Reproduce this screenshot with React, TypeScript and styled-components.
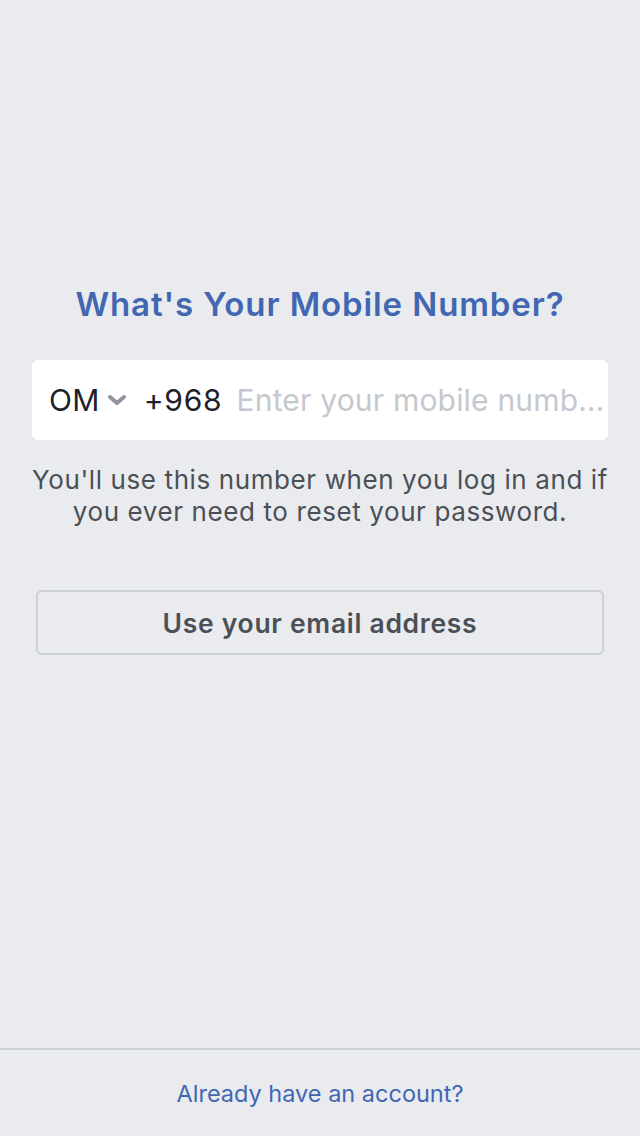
import React from "react";
import styled, { createGlobalStyle } from "styled-components";

const Global = createGlobalStyle`
  html, body { margin: 0; padding: 0; background: #e9ebee; }
  body { font-family: Inter, "Noto Sans", "Liberation Sans", sans-serif; -webkit-font-smoothing: antialiased; }
  * { box-sizing: border-box; }
`;

const Page = styled.div`
  display: flex;
  flex-direction: column;
  height: 1136px;
  background: #e9ebee;
`;

const Main = styled.main`
  flex: 1;
  display: flex;
  flex-direction: column;
  padding: 282px 32px 0;
`;

const Title = styled.h1`
  margin: 0;
  text-align: center;
  font-size: 33px;
  line-height: 44px;
  font-weight: 600;
  color: #4267b2;
  letter-spacing: 0.9px;
  white-space: nowrap;
`;

const InputBox = styled.div`
  margin-top: 34px;
  height: 80px;
  background: #fff;
  border-radius: 6px;
  display: flex;
  align-items: center;
  padding: 0 0 0 17px;
  overflow: hidden;
  font-size: 30px;
  color: #1d2129;
`;

const Country = styled.span`
  display: flex;
  align-items: center;
  gap: 7px;
  letter-spacing: 0.3px;
`;

const Code = styled.span`
  margin-left: 17px;
  letter-spacing: 0.8px;
`;

const PhoneInput = styled.input`
  flex: 1;
  min-width: 0;
  margin-left: 14px;
  padding: 0 2px 0 0;
  border: none;
  outline: none;
  background: transparent;
  font-family: inherit;
  font-size: 30px;
  color: #1d2129;
  letter-spacing: 0.2px;
  text-overflow: ellipsis;
  &::placeholder {
    color: #c5c8ce;
    opacity: 1;
  }
`;

const Help = styled.p`
  margin: 24px -8px 0;
  text-align: center;
  font-size: 26px;
  line-height: 32px;
  color: #4b4f56;
  letter-spacing: 0.6px;
`;

const Button = styled.button`
  margin: 62px 4px 0;
  height: 65px;
  background: transparent;
  border: 2px solid #ccd0d5;
  border-radius: 6px;
  font-family: inherit;
  font-size: 26.5px;
  font-weight: 600;
  color: #4b4f56;
  letter-spacing: 0.7px;
`;

const Footer = styled.footer`
  border-top: 2px solid #ccd0d5;
  height: 88px;
  display: flex;
  align-items: center;
  justify-content: center;
  font-size: 23.5px;
  color: #4267b2;
  letter-spacing: 0;
`;

const Chevron = () => (
  <svg width="20" height="12" viewBox="0 0 20 12">
    <path d="M3 3 L10 9 L17 3" fill="none" stroke="#90949c" strokeWidth="4" strokeLinecap="round" strokeLinejoin="round" />
  </svg>
);

export default function App() {
  return (
    <Page>
      <Global />
      <Main>
        <Title>What's Your Mobile Number?</Title>
        <InputBox>
          <Country>
            OM
            <Chevron />
          </Country>
          <Code>+968</Code>
          <PhoneInput type="tel" placeholder="Enter your mobile number" />
        </InputBox>
        <Help>
          You'll use this number when you log in and if
          <br />
          you ever need to reset your password.
        </Help>
        <Button>Use your email address</Button>
      </Main>
      <Footer>Already have an account?</Footer>
    </Page>
  );
}
